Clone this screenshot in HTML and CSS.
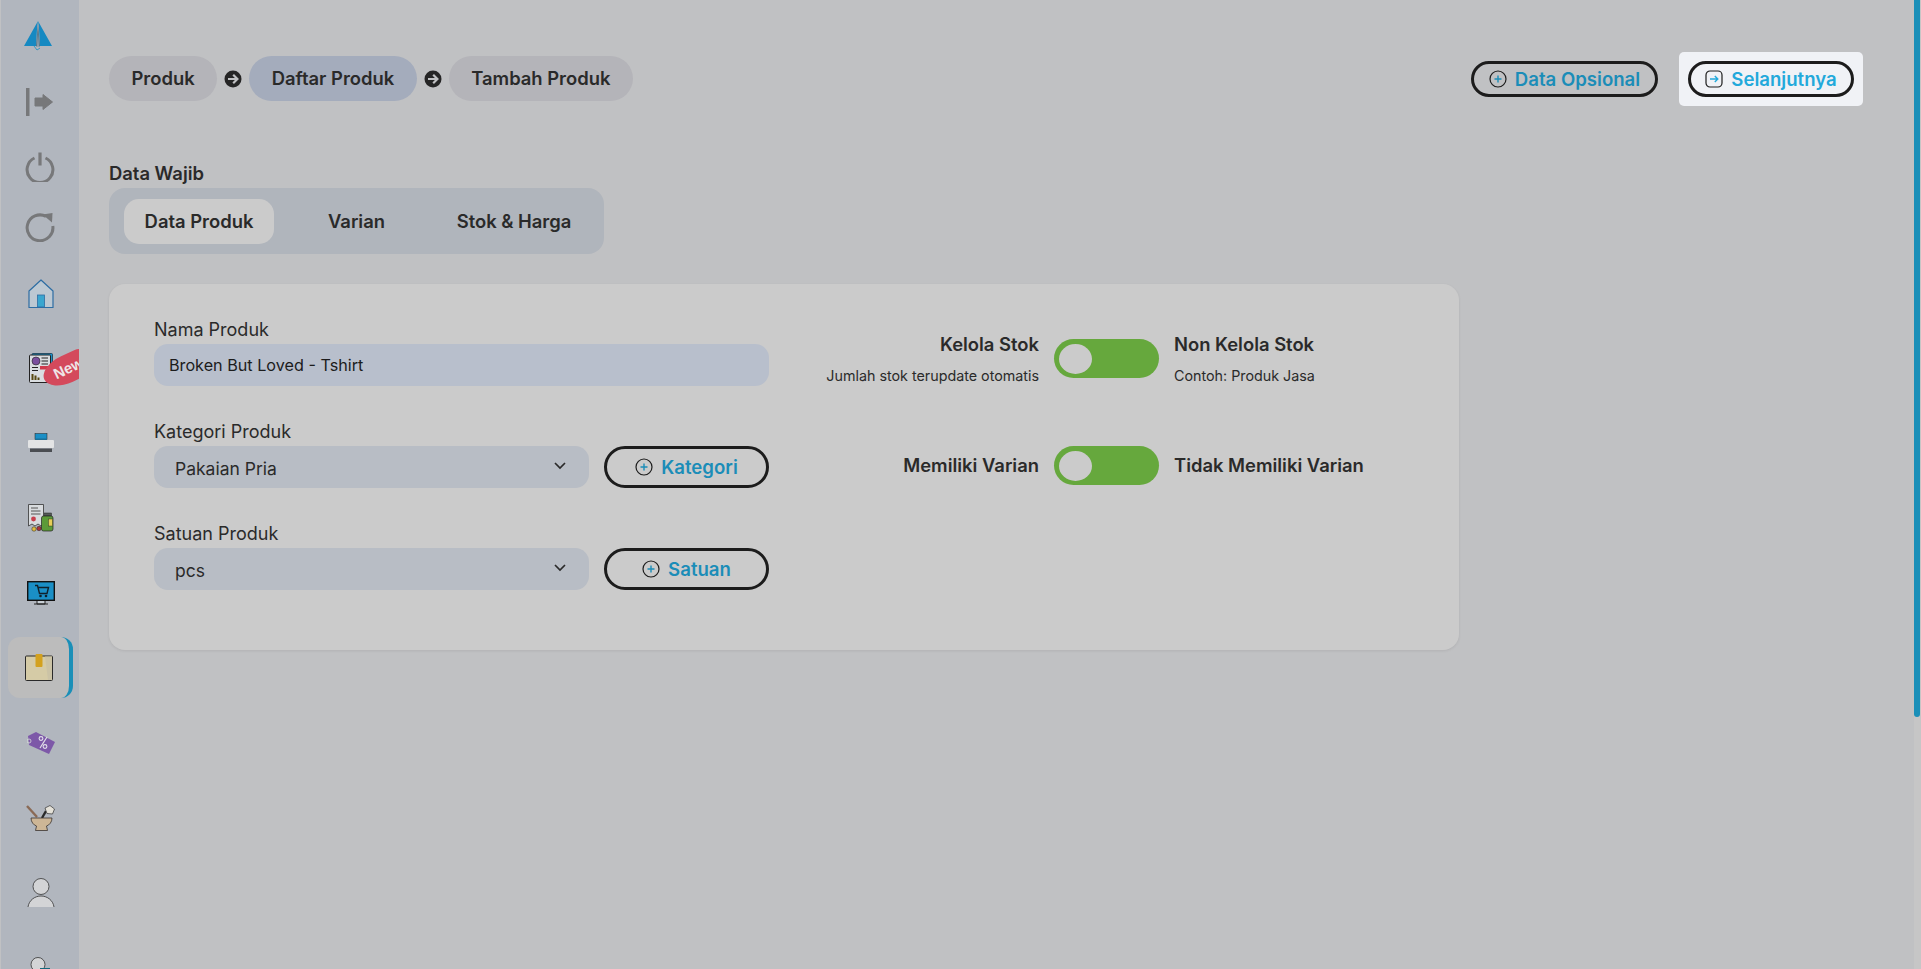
FILE: index.html
```html
<!DOCTYPE html>
<html lang="id">
    <head>
        <meta charset="UTF-8" />
        <meta name="viewport" content="width=device-width, initial-scale=1.0" />
        <title>Tambah Produk</title>
        <link rel="stylesheet" href="styles.css">
    </head>
    <body>
        <div class="app">
            <nav class="sidebar">
                <div class="nav-top">
                    <a class="nav-logo">
                        <svg width="30" height="32" viewBox="0 0 30 32">
                            <path d="M15 1 L1 26 L13 26 L14.2 6 Z" fill="#1589c2" />
                            <path d="M15 1 L29 26 L17 26 L15.8 6 Z" fill="#1589c2" />
                            <path d="M15 3 L13 26 L14.3 27 L15 12 L15.7 27 L17 26 Z" fill="#4f7488" />
                            <path d="M11 26 L14 30 L17 28" fill="none" stroke="#3a96bf" stroke-width="1" />
                        </svg>
                    </a>
                    <a class="nav-exit">
                        <svg width="30" height="30" viewBox="0 0 30 30">
                            <rect x="1" y="1" width="3.5" height="28" fill="#77787a" />
                            <path d="M10 11 H18 V7.5 L27.5 15 L18 22.5 V19 H10 Z" fill="#77787a" stroke="#77787a" stroke-linejoin="round" />
                        </svg>
                    </a>
                    <a class="nav-power">
                        <svg width="30" height="30" viewBox="0 0 30 30">
                            <path d="M9.5 6 A12.9 12.9 0 1 0 20.5 6" fill="none" stroke="#77787a" stroke-width="3" />
                            <rect x="13.4" y="0.5" width="3.2" height="13" fill="#77787a" />
                        </svg>
                    </a>
                    <a class="nav-refresh">
                        <svg width="30" height="30" viewBox="0 0 30 30">
                            <path d="M21 4.4 A12.9 12.9 0 1 0 27.8 14" fill="none" stroke="#77787a" stroke-width="3" />
                            <path d="M17.5 2.5 L27.5 1 L27 10.5 Z" fill="#77787a" />
                        </svg>
                    </a>
                    <a class="nav-home">
                        <svg width="26" height="30" viewBox="0 0 26 30">
                            <path d="M1 12 L13 1 L25 12 V28.5 H1 Z" fill="#bcc8d2" stroke="#2d6da3" stroke-width="1.2" stroke-linejoin="round" />
                            <rect x="9.5" y="16" width="7" height="12" fill="#3aa6cf" stroke="#2d6da3" stroke-width="0.8" />
                        </svg>
                    </a>
                </div>
                <a class="nav-item">
                    <svg width="24" height="30" viewBox="0 0 24 30">
                        <rect x="3" y="0.5" width="20.5" height="25" rx="1" fill="#1a8fc6" stroke="#1d3a4d" stroke-width="0.8" />
                        <rect x="0.5" y="2" width="21" height="27.5" rx="1" fill="#d9dde0" stroke="#222" />
                        <circle cx="7" cy="8" r="4" fill="#7a4f9e" stroke="#222" stroke-width="0.6" />
                        <path d="M12.5 5 H19 M12.5 8 H19 M12.5 11 H19 M3 14.5 H9 M3 17.5 H9" stroke="#222" stroke-width="1" />
                        <rect x="11" y="13" width="10" height="3.5" fill="#cf3a4c" />
                        <path d="M3.5 27 V21 M6.5 27 V22.5 M9.5 27 V24.5" stroke="#57480f" stroke-width="2" />
                    </svg>
                    <span class="badge-new"><span>New</span></span>
                </a>
                <a class="nav-item">
                    <svg width="28" height="20" viewBox="0 0 28 20">
                        <rect x="8" y="0.5" width="12" height="6" fill="#1a8fc6" stroke="#222" stroke-width="0.5" />
                        <path d="M8 7 H20 L19 5.5 H9 Z" fill="#1b6f96" />
                        <rect x="1" y="7" width="26" height="8" rx="1" fill="#e3e4e5" />
                        <rect x="3" y="15.5" width="22" height="3.5" fill="#4a4d52" />
                    </svg>
                </a>
                <a class="nav-item">
                    <svg width="26" height="28" viewBox="0 0 26 28">
                        <path d="M0.5 0.5 H15.5 V20 L13 22 L10 20 L7 22 L4 20 L0.5 22 Z" fill="#d8dbde" stroke="#333" stroke-width="0.8" />
                        <path d="M3 4 H10 M3 7 H12.5 M3 10 H12.5" stroke="#555" stroke-width="1" />
                        <circle cx="5.5" cy="15" r="2.4" fill="#c73f4d" />
                        <rect x="16.5" y="9" width="7" height="3" fill="#555b57" stroke="#222" stroke-width="0.5" />
                        <rect x="13.5" y="12" width="11.5" height="15" rx="2" fill="#5c9a38" stroke="#222" stroke-width="0.7" />
                        <rect x="20.5" y="15" width="4" height="7" fill="#e7cf58" stroke="#222" stroke-width="0.4" />
                        <circle cx="6" cy="25" r="2.2" fill="#e2bd3f" stroke="#222" stroke-width="0.5" />
                        <circle cx="11" cy="24.5" r="2.2" fill="#a8333b" stroke="#222" stroke-width="0.5" />
                    </svg>
                </a>
                <a class="nav-item">
                    <svg width="28" height="24" viewBox="0 0 28 24">
                        <path d="M10 19 H18 V23 H10 Z M7 23 H21" fill="#c9d0d6" stroke="#222" />
                        <rect x="0.7" y="0.7" width="26.6" height="18.6" fill="#1a8fc6" stroke="#111" stroke-width="1.4" />
                        <path d="M8 4.5 H10.5 L12.5 12.5 H20 L21.5 6.5 H11" fill="none" stroke="#10212c" stroke-width="1.4" />
                        <circle cx="13.5" cy="15" r="1.3" fill="#10212c" />
                        <circle cx="19" cy="15" r="1.3" fill="#10212c" />
                    </svg>
                </a>
                <a class="nav-item is-active">
                    <svg width="28" height="27" viewBox="0 0 28 27">
                        <rect x="0.5" y="2" width="27" height="24.5" rx="1" fill="#d5cba6" stroke="#2a2a2a" />
                        <path d="M20 2.5 H27 V26 H23 Z" fill="#cbc3a6" />
                        <rect x="10.5" y="0" width="7" height="13" rx="1" fill="#d3a11e" />
                    </svg>
                </a>
                <a class="nav-item">
                    <svg width="28" height="24" viewBox="0 0 28 24">
                        <path d="M9 1 L28 11 L22 23 L2 14 L1 5 Z" fill="#7d58a8" />
                        <circle cx="2" cy="10" r="2" fill="none" stroke="#d8dadc" stroke-width="0.8" />
                        <path d="M20 6 L13 17" stroke="#e3e1ea" stroke-width="1.2" />
                        <circle cx="14" cy="7.5" r="1.9" fill="none" stroke="#e3e1ea" stroke-width="1.1" />
                        <circle cx="18" cy="15.5" r="1.9" fill="none" stroke="#e3e1ea" stroke-width="1.1" />
                    </svg>
                </a>
                <a class="nav-item">
                    <svg width="30" height="26" viewBox="0 0 30 26">
                        <path d="M1 1 L11 12" stroke="#8a6a55" stroke-width="2.4" />
                        <path d="M16 13 L20 6" stroke="#2a2a2a" stroke-width="2.4" />
                        <path d="M19 3 L24 0.5 L28.5 4 L26.5 9 L21 8.5 Z" fill="#e4e1d8" stroke="#333" stroke-width="0.7" />
                        <path d="M5 13 H26 C26 17 23.5 20 20.5 21 L21.5 25.5 H9.5 L10.5 21 C7.5 20 5 17 5 13 Z" fill="#cdb696" stroke="#3a3330" stroke-width="0.8" />
                    </svg>
                </a>
                <a class="nav-item">
                    <svg width="28" height="30" viewBox="0 0 28 30">
                        <circle cx="14" cy="8.5" r="8" fill="#d3d4d6" stroke="#333" stroke-width="0.8" />
                        <path d="M1 29 C2 22 8 18 14 18 C20 18 26 22 27 29 Z" fill="#d3d4d6" />
                        <path d="M1 29 C2 22 8 18 14 18 C20 18 26 22 27 29" fill="none" stroke="#333" stroke-width="0.8" />
                    </svg>
                </a>
                <a class="nav-item">
                    <svg width="28" height="30" viewBox="0 0 28 30">
                        <circle cx="11" cy="11.5" r="7" fill="#d3d4d6" stroke="#333" stroke-width="0.8" />
                        <rect x="13" y="15" width="10" height="8" fill="#136a7d" />
                    </svg>
                </a>
            </nav>

            <main class="content">
                <header class="topbar">
                    <div class="crumbs">
                        <span class="crumb">Produk</span>
                        <svg class="crumb-arrow" width="18" height="18" viewBox="0 0 18 18">
                            <circle cx="9" cy="9" r="8.5" fill="#252525" />
                            <path d="M4 9 H13 M9.2 4.8 L13.4 9 L9.2 13.2" fill="none" stroke="#c0c1c3" stroke-width="2.2" />
                        </svg>
                        <span class="crumb crumb-current">Daftar Produk</span>
                        <svg class="crumb-arrow" width="18" height="18" viewBox="0 0 18 18">
                            <circle cx="9" cy="9" r="8.5" fill="#252525" />
                            <path d="M4 9 H13 M9.2 4.8 L13.4 9 L9.2 13.2" fill="none" stroke="#c0c1c3" stroke-width="2.2" />
                        </svg>
                        <span class="crumb">Tambah Produk</span>
                    </div>
                    <div class="actions">
                        <button class="btn btn-optional">
                            <svg width="18" height="18" viewBox="0 0 18 18">
                                <circle cx="9" cy="9" r="8" fill="none" stroke="#1c1c1c" stroke-width="1.2" />
                                <path d="M5.5 9 H12.5 M9 5.5 V12.5" stroke="#1b8db8" stroke-width="1.4" />
                            </svg>
                            Data Opsional
                        </button>
                        <div class="next-wrap">
                            <button class="btn btn-next">
                                <svg width="18" height="18" viewBox="0 0 18 18">
                                    <rect x="1" y="1" width="16" height="16" rx="4" fill="none" stroke="#1c1c1c" stroke-width="1.2" />
                                    <path d="M5 9 H12.5 M9.8 6 L12.8 9 L9.8 12" fill="none" stroke="#22a9db" stroke-width="1.4" />
                                </svg>
                                Selanjutnya
                            </button>
                        </div>
                    </div>
                </header>

                <h2 class="section-title">Data Wajib</h2>
                <div class="tabs">
                    <span class="tab tab-active">Data Produk</span>
                    <span class="tab">Varian</span>
                    <span class="tab">Stok &amp; Harga</span>
                </div>

                <section class="card">
                    <div class="form-col">
                        <div class="field">
                            <label class="field-label">Nama Produk</label>
                            <input class="text-input" type="text" value="Broken But Loved - Tshirt" />
                        </div>
                        <div class="field">
                            <label class="field-label">Kategori Produk</label>
                            <div class="field-row">
                                <div class="select">
                                    <span>Pakaian Pria</span>
                                    <svg width="12" height="8" viewBox="0 0 12 8"><path d="M1 1 L6 6 L11 1" fill="none" stroke="#2a2a2a" stroke-width="1.7" /></svg>
                                </div>
                                <button class="btn btn-add">
                                    <svg width="18" height="18" viewBox="0 0 18 18">
                                        <circle cx="9" cy="9" r="8" fill="none" stroke="#1c1c1c" stroke-width="1.2" />
                                        <path d="M5.5 9 H12.5 M9 5.5 V12.5" stroke="#1b8db8" stroke-width="1.4" />
                                    </svg>
                                    Kategori
                                </button>
                            </div>
                        </div>
                        <div class="field">
                            <label class="field-label">Satuan Produk</label>
                            <div class="field-row">
                                <div class="select">
                                    <span>pcs</span>
                                    <svg width="12" height="8" viewBox="0 0 12 8"><path d="M1 1 L6 6 L11 1" fill="none" stroke="#2a2a2a" stroke-width="1.7" /></svg>
                                </div>
                                <button class="btn btn-add">
                                    <svg width="18" height="18" viewBox="0 0 18 18">
                                        <circle cx="9" cy="9" r="8" fill="none" stroke="#1c1c1c" stroke-width="1.2" />
                                        <path d="M5.5 9 H12.5 M9 5.5 V12.5" stroke="#1b8db8" stroke-width="1.4" />
                                    </svg>
                                    Satuan
                                </button>
                            </div>
                        </div>
                    </div>
                    <div class="switch-col">
                        <div class="switch-row switch-row-tall">
                            <div class="switch-left">
                                <div class="switch-title">Kelola Stok</div>
                                <div class="switch-note">Jumlah stok terupdate otomatis</div>
                            </div>
                            <span class="toggle"><span class="toggle-knob"></span></span>
                            <div>
                                <div class="switch-title">Non Kelola Stok</div>
                                <div class="switch-note">Contoh: Produk Jasa</div>
                            </div>
                        </div>
                        <div class="switch-row">
                            <div class="switch-left switch-title">Memiliki Varian</div>
                            <span class="toggle"><span class="toggle-knob"></span></span>
                            <div class="switch-title">Tidak Memiliki Varian</div>
                        </div>
                    </div>
                </section>
            </main>
        </div>
        <div class="scroll-rail"><div class="scroll-thumb"></div></div>
    </body>
</html>
```

FILE: styles.css
```css
* {
    margin: 0;
    padding: 0;
    box-sizing: border-box;
}
html,
body {
    height: 100%;
    overflow: hidden;
}
body {
    background: #c0c1c3;
    color: #2a2a2a;
    font-family: "Inter", "Noto Sans", sans-serif;
}
.app {
    display: flex;
    height: 969px;
    overflow: hidden;
}

/* sidebar */
.sidebar {
    position: relative;
    width: 79px;
    flex-shrink: 0;
    height: 969px;
    overflow: hidden;
    background: #b1b6be;
    border-left: 1px solid #c0c1c3;
}
.nav-top {
    height: 330px;
}
.nav-top a {
    display: flex;
    justify-content: center;
}
.nav-logo {
    height: 70px;
    padding-top: 20px;
    padding-right: 4px;
}
.nav-exit {
    height: 64px;
    padding-top: 17px;
}
.nav-power {
    height: 66px;
    padding-top: 18px;
}
.nav-refresh {
    height: 54px;
    padding-top: 12px;
}
.nav-home {
    height: 76px;
    padding-top: 25px;
    padding-left: 2px;
}
.nav-item {
    position: relative;
    display: flex;
    align-items: center;
    justify-content: center;
    height: 75px;
    padding-left: 2px;
}
.nav-item.is-active {
    padding-left: 0;
    padding-right: 2px;
}
.nav-item.is-active::before {
    content: "";
    position: absolute;
    left: 7px;
    top: 7px;
    box-sizing: border-box;
    width: 65px;
    height: 61px;
    background: #bcbcbc;
    border-right: 4px solid #1a8fb8;
    border-radius: 12px;
}
.nav-item svg {
    position: relative;
}
.badge-new {
    position: absolute;
    left: 41px;
    top: 25px;
    width: 50px;
    height: 28px;
    background: #d4495c;
    border-radius: 50% 10px 10px 50%;
    transform: rotate(-25deg);
    color: #efe6e8;
    font: 700 15px/28px "Liberation Sans", sans-serif;
}
.badge-new span {
    margin-left: 11px;
}

/* main */
.content {
    flex: 1;
    min-width: 0;
    padding: 52px 58px 0 30px;
}
.topbar {
    display: flex;
    align-items: center;
    justify-content: space-between;
    height: 54px;
}
.crumbs {
    display: flex;
    align-items: center;
    margin-bottom: 1px;
}
.crumb {
    height: 45px;
    padding: 0 22.5px;
    background: #b4b4b9;
    border-radius: 23px;
    font-size: 18.4px;
    font-weight: 600;
    line-height: 45px;
    white-space: nowrap;
}
.crumb-current {
    background: #a4acbc;
}
.crumb-arrow {
    margin: 0 7px;
}
.actions {
    display: flex;
    align-items: center;
}
.btn {
    display: flex;
    align-items: center;
    justify-content: center;
    gap: 8px;
    height: 36px;
    background: transparent;
    border: 3px solid #1c1c1c;
    border-radius: 18px;
    color: #1b8db8;
    font-family: inherit;
    font-size: 18.6px;
    font-weight: 600;
}
.btn-optional {
    width: 187px;
}
.next-wrap {
    display: flex;
    align-items: center;
    justify-content: center;
    width: 184px;
    height: 54px;
    margin-left: 21px;
    background: #f0f2f6;
    border-radius: 5px;
}
.btn-next {
    width: 166px;
    color: #22a9db;
}
.section-title {
    margin-top: 55px;
    margin-bottom: 3px;
    font-size: 18.4px;
    font-weight: 600;
    line-height: 24px;
}
.tabs {
    display: grid;
    grid-template-columns: repeat(3, 150px);
    column-gap: 7.5px;
    align-items: center;
    width: 495px;
    height: 66px;
    padding: 0 15px;
    background: #b0b5bc;
    border-radius: 16px;
}
.tab {
    height: 45px;
    border-radius: 15px;
    font-size: 18.4px;
    font-weight: 600;
    line-height: 45px;
    text-align: center;
}
.tab-active {
    background: #cbcbcb;
}

/* card */
.card {
    display: flex;
    width: 1350px;
    height: 366px;
    margin-top: 30px;
    padding: 34px 0 0 45px;
    background: #cbcbcb;
    border-radius: 16px;
    box-shadow: 0 1px 3px rgba(0, 0, 0, 0.08);
}
.form-col {
    display: flex;
    flex-direction: column;
    gap: 34px;
    width: 615px;
}
.field-label {
    display: block;
    margin-bottom: 2px;
    font-size: 18px;
    font-weight: 400;
    line-height: 24px;
}
.text-input {
    display: block;
    width: 100%;
    height: 42px;
    padding: 0 15px;
    background: #b8bfcc;
    border: none;
    border-radius: 14px;
    color: #1c1c1c;
    font-family: inherit;
    font-size: 16.2px;
    outline: none;
}
.field-row {
    display: flex;
    gap: 15px;
}
.select {
    display: flex;
    align-items: center;
    justify-content: space-between;
    width: 435px;
    height: 42px;
    padding: 2px 23px 0 21px;
    background: #b8bdc5;
    border-radius: 14px;
    font-size: 17.5px;
}
.select svg {
    margin-top: -4px;
}
.btn-add {
    width: 165px;
    height: 42px;
    border-radius: 21px;
}
.switch-col {
    margin-left: 21px;
    padding-top: 15px;
}
.switch-row {
    display: grid;
    grid-template-columns: 249px 105px auto;
    column-gap: 15px;
    align-items: center;
}
.switch-row-tall {
    align-items: start;
    margin-bottom: 60px;
}
.switch-row-tall .toggle {
    margin-top: 6px;
}
.switch-left {
    text-align: right;
}
.switch-title {
    padding-bottom: 2px;
    font-size: 18.4px;
    font-weight: 600;
    line-height: 22px;
    white-space: nowrap;
}
.switch-note {
    margin-top: 9px;
    font-size: 14.3px;
    line-height: 20px;
    white-space: nowrap;
}
.toggle {
    display: flex;
    align-items: center;
    width: 105px;
    height: 39px;
    padding-left: 5px;
    background: #66a83d;
    border-radius: 20px;
}
.toggle-knob {
    width: 33px;
    height: 30px;
    background: #cbcbcb;
    border-radius: 50%;
}

/* scrollbar drawn over the page edge */
.scroll-rail {
    position: fixed;
    top: 0;
    right: 0;
    width: 7px;
    height: 100%;
    background: #c6c6c6;
}
.scroll-thumb {
    width: 6px;
    height: 717px;
    background: #1a8fb8;
    border-radius: 0 0 3px 3px;
}
```
